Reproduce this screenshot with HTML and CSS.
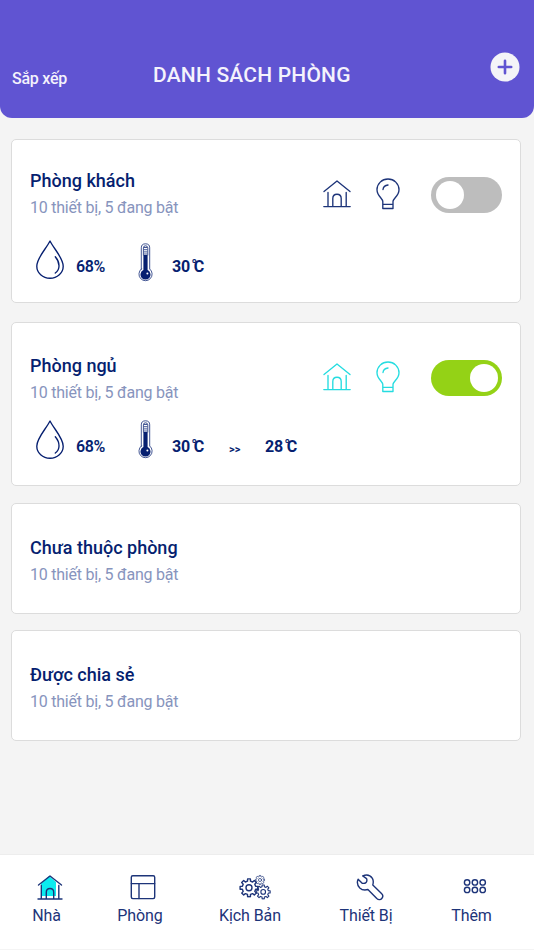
FILE: index.html
```html
<!DOCTYPE html>
<html lang="vi">
<head>
<meta charset="utf-8">
<meta name="viewport" content="width=device-width, initial-scale=1">
<title>Danh sách phòng</title>
<link rel="stylesheet" href="styles.css">
</head>
<body>
<svg class="defs" width="0" height="0" aria-hidden="true">
  <symbol id="house" viewBox="0 0 28 28"><path d="M1 11.5 14 1 27 11.5M5 12.5V26M23.2 12.5V26M9.8 26V18.5Q9.8 14.2 14 14.2T18.2 18.5V26M.8 26.6H27.2"/></symbol>
  <symbol id="bulb" viewBox="0 0 24 32"><path d="M6.8 30.5V23.5C6.8 20.5 1 18 1 11.7A11 10.7 0 0 1 23 11.7C23 18 17 20.5 17 23.5V30.5ZM6.8 26.3H17M7 11.5Q7.5 7.5 12 7"/></symbol>
  <symbol id="drop" viewBox="0 0 28 39"><path d="M14 1C10 9 .8 18 .8 26.2A13.2 12 0 0 0 27.2 26.2C27.2 18 18 9 14 1ZM19.3 16.8C24.5 23 24 29.5 19.3 33"/></symbol>
  <symbol id="thermo" viewBox="0 0 15 39">
    <path class="thin" d="M3.3 26V4.8Q3.3.8 7.5.8T11.7 4.8V26A6.6 6.6 0 1 1 3.3 26ZM5.4 12V4.8Q5.4 2.8 7.5 2.8T9.8 4.8V12M6.2 4.5H9M6.2 6.7H9M6.2 8.9H9M6.2 11H9"/>
    <path class="solid" d="M5.4 12H9.6V27A5 5 0 1 1 5.4 27Z"/><circle class="shine" cx="9.4" cy="30.4" r="1"/>
  </symbol>
  <symbol id="gear" viewBox="-10 -10 20 20"><path d="M8.9-1.4V1.4L6.6 1.5 5.8 3.6 7.3 5.3 5.3 7.3 3.6 5.8 1.5 6.6 1.4 8.9H-1.4L-1.5 6.6-3.6 5.8-5.3 7.3-7.3 5.3-5.8 3.6-6.6 1.5-8.9 1.4V-1.4L-6.6-1.5-5.8-3.6-7.3-5.3-5.3-7.3-3.6-5.8-1.5-6.6-1.4-8.9H1.4L1.5-6.6 3.6-5.8 5.3-7.3 7.3-5.3 5.8-3.6 6.6-1.5Z"/><circle r="3"/></symbol>
</svg>

<header class="header">
  <span class="sort">Sắp xếp</span>
  <h1 class="heading">DANH SÁCH PHÒNG</h1>
  <svg class="add" viewBox="0 0 30 30"><circle cx="15" cy="15" r="14.5"/><path d="M15 8.8V21.2M8.8 15H21.2"/></svg>
</header>

<main class="rooms">
  <section class="card card-living">
    <div class="card-head">
      <div><h2 class="name">Phòng khách</h2><p class="info">10 thiết bị, 5 đang bật</p></div>
      <div class="actions">
        <svg class="icon house"><use href="#house"/></svg>
        <svg class="icon bulb"><use href="#bulb"/></svg>
        <span class="toggle"><span class="knob"></span></span>
      </div>
    </div>
    <div class="meters">
      <svg class="icon drop"><use href="#drop"/></svg><span class="humidity">68%</span>
      <svg class="icon thermo"><use href="#thermo"/></svg><span class="temp">30<span class="deg">°</span>C</span>
    </div>
  </section>

  <section class="card card-bed">
    <div class="card-head">
      <div><h2 class="name">Phòng ngủ</h2><p class="info">10 thiết bị, 5 đang bật</p></div>
      <div class="actions active">
        <svg class="icon house"><use href="#house"/></svg>
        <svg class="icon bulb"><use href="#bulb"/></svg>
        <span class="toggle on"><span class="knob"></span></span>
      </div>
    </div>
    <div class="meters">
      <svg class="icon drop"><use href="#drop"/></svg><span class="humidity">68%</span>
      <svg class="icon thermo"><use href="#thermo"/></svg><span class="temp">30<span class="deg">°</span>C</span>
      <span class="arrows">&gt;&gt;</span><span class="temp">28<span class="deg">°</span>C</span>
    </div>
  </section>

  <section class="card card-small">
    <h2 class="name">Chưa thuộc phòng</h2><p class="info">10 thiết bị, 5 đang bật</p>
  </section>
  <section class="card card-small">
    <h2 class="name">Được chia sẻ</h2><p class="info">10 thiết bị, 5 đang bật</p>
  </section>
</main>

<nav class="nav">
  <a class="tab tab-home"><svg class="nav-icon" viewBox="0 0 32 28"><path class="fill" d="M7 9.5 15 2 22 8V22H7Z"/><path d="M4.5 11 16 2 27.5 11M7.3 11.5V24.5M24.8 11.5V24.5M12.3 24.5V18.3Q12.3 14.5 16 14.5T19.7 18.3V24.5M4 25H28"/></svg><span>Nhà</span></a>
  <a class="tab tab-room"><svg class="nav-icon" viewBox="0 0 32 28"><rect x="4.3" y="1.8" width="23.4" height="22.8" rx="1.5"/><path d="M4.3 9.6H27.7M12 9.6V24.6"/></svg><span>Phòng</span></a>
  <a class="tab tab-scene"><svg class="nav-icon" viewBox="0 0 32 28"><use href="#gear" x="0" y="3.8" width="20" height="20"/><use href="#gear" x="16.4" y="10.1" width="15.6" height="15.6"/><use href="#gear" x="15.8" y="0.8" width="10.4" height="10.4"/></svg><span>Kịch Bản</span></a>
  <a class="tab tab-device"><svg class="nav-icon" viewBox="0 0 32 28"><path d="M4.1 5.2 8.2 9.3Q10.8 9.7 12.1 8.4T12.6 4.6L8.7 1.9C12.5.2 16.3 1.2 18.4 4.3Q19.9 7 18.8 11L27.5 19.4C30.8 22.5 26.5 28 22.8 24.6L13.9 15.5Q8.9 16.9 5.8 13.9C3.3 11.2 2.7 8.3 4.1 5.2Z"/></svg><span>Thiết Bị</span></a>
  <a class="tab tab-more"><svg class="nav-icon" viewBox="0 0 32 28"><g><circle cx="8.1" cy="8.4" r="2.7"/><circle cx="15.9" cy="8.4" r="2.7"/><circle cx="23.7" cy="8.4" r="2.7"/><circle cx="8.1" cy="15.9" r="2.7"/><circle cx="15.9" cy="15.9" r="2.7"/><circle cx="23.7" cy="15.9" r="2.7"/></g></svg><span>Thêm</span></a>
</nav>
</body>
</html>
```
FILE: styles.css
```css
* { box-sizing: border-box; }

body {
  margin: 0;
  height: 950px;
  display: flex;
  flex-direction: column;
  background: #f4f4f4;
  color: #061f70;
  font-family: Roboto, "Noto Sans", sans-serif;
  overflow: hidden;
}

h1, h2, p { margin: 0; }
svg { display: block; fill: none; stroke: currentColor; stroke-linecap: round; stroke-linejoin: round; }
.defs { display: none; }

.header {
  height: 118px;
  flex: none;
  display: grid;
  grid-template-columns: 141px 1fr 30px;
  align-items: start;
  padding: 0 14px 0 12px;
  background: #6054d2;
  border-radius: 0 0 12px 12px;
  color: #f4f2fc;
}
.sort { margin-top: 68.6px; font-size: 16px; line-height: 20px; font-weight: 500; letter-spacing: -.25px; }
.heading { margin-top: 61px; font-size: 21px; line-height: 28px; font-weight: 500; letter-spacing: .2px; white-space: nowrap; }
.add { width: 30px; height: 30px; margin-top: 52px; }
.add circle { fill: #f4f4f8; stroke: none; }
.add path { stroke: #6054d2; stroke-width: 2.6; }

.rooms { flex: 1; padding: 21px 13px 0 11px; }
.card {
  background: #fff;
  border: 1px solid #dcdcdc;
  border-radius: 5px;
  padding: 0 18px;
}
.card-living { height: 164px; padding-top: 28px; margin-bottom: 19px; }
.card-bed { height: 164px; padding-top: 30px; margin-bottom: 17px; }
.card-small { height: 111px; padding-top: 31px; margin-bottom: 16px; }

.name { font-size: 18px; line-height: 26px; font-weight: 500; }
.info { font-size: 16px; line-height: 27px; color: #8794bd; letter-spacing: -.23px; }

.card-head { display: flex; justify-content: space-between; align-items: center; }
.actions { display: flex; align-items: center; color: #1d3479; }
.active { color: #25dce0; margin-bottom: 4px; }
.icon { flex: none; stroke-width: 1.35; }
.house { width: 28px; height: 28px; margin: 0 26px 1px 0; }
.bulb { width: 24px; height: 32px; margin: 0 31px 1px -1px; }
.toggle {
  width: 71px;
  height: 36px;
  padding: 4px 5px;
  display: flex;
  border-radius: 18px;
  background: #bdbdbd;
}
.toggle.on { background: #94d216; justify-content: flex-end; padding-right: 4px; }
.knob { width: 28px; height: 28px; border-radius: 50%; background: #fff; }

.meters { display: flex; align-items: flex-start; padding-left: 6px; margin-top: 19px; font-size: 16px; line-height: 20px; font-weight: 700; }
.card-bed .meters { margin-top: 14px; }
.drop { width: 28px; height: 39px; }
.humidity { width: 62px; margin: 17px 0 0 12px; font-weight: 600; letter-spacing: -.35px; }
.thermo { width: 15px; height: 39px; margin-top: 3px; }
.card-bed .thermo { margin-top: 0; }
.temp { width: 32px; margin: 17px 0 0 19px; white-space: nowrap; letter-spacing: -.2px; }
.arrows { width: 13px; margin: 20px 0 0 25px; font-size: 11px; }
.arrows + .temp { margin-left: 23px; }
.deg { position: relative; top: -1px; font-weight: 400; margin: 0 -3.2px 0 1.2px; }
.thin { stroke-width: .75; }
.solid { fill: currentColor; stroke: none; }
.shine { fill: #fff; stroke: none; }

.nav {
  height: 96px;
  flex: none;
  display: flex;
  align-items: flex-start;
  padding: 19px 0 0 33px;
  background: #fff;
  border-top: 1px solid #ededed;
  border-bottom: 1px solid #f4f4f4;
  color: #1d3479;
}
.tab { display: flex; flex-direction: column; align-items: center; font-size: 16px; line-height: 24px; letter-spacing: -.1px; white-space: nowrap; }
.nav-icon { width: 32px; height: 28px; stroke-width: 1.4; }
.tab span { margin-top: 1.5px; }
.tab-home { width: 27px; margin-right: 58px; }
.tab-room { width: 44px; margin-right: 58px; }
.tab-scene { width: 60px; margin-right: 60px; }
.tab-device { width: 52px; margin-right: 60px; }
.tab-more { width: 39px; }
.tab .nav-icon { margin-left: 6px; flex: none; }
.tab-scene .nav-icon { margin-left: 9px; }
.tab-device .nav-icon { margin-left: 8px; }
.fill { fill: #0cebf0; stroke: none; }
```
